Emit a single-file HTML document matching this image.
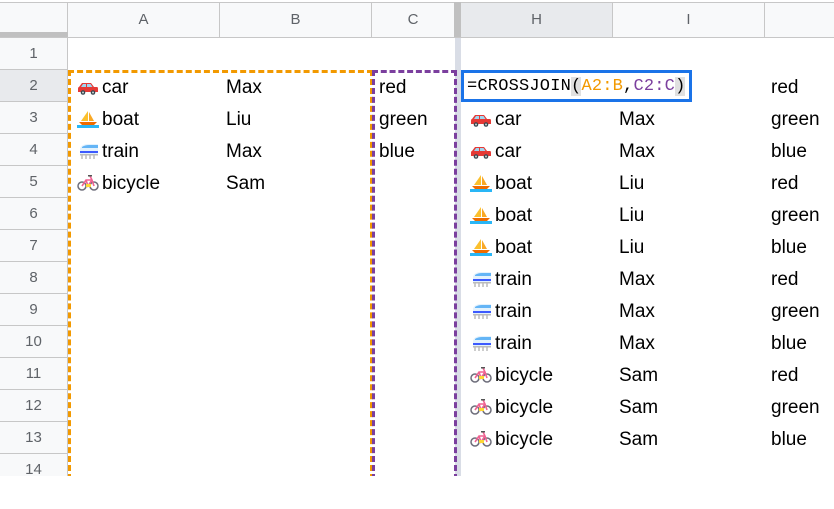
<!DOCTYPE html>
<html><head><meta charset="utf-8"><style>
*{margin:0;padding:0;box-sizing:border-box}
body{width:834px;height:509px;background:#fff;position:relative;overflow:hidden;font-family:"Liberation Sans",Arial,sans-serif;}
.a{position:absolute}
.hd{position:absolute;top:2px;height:35px;background:#f8f9fa;border-right:1px solid #c7c7c7;border-top:1px solid #c7c7c7;color:#5f6368;font-size:15px;text-align:center;line-height:34px}
.rh{position:absolute;left:0;width:68px;height:32px;background:#f8f9fa;border-bottom:1px solid #c7c7c7;border-right:1px solid #c7c7c7;color:#5f6368;font-size:15px;text-align:center;line-height:32px}
.t{position:absolute;font-size:19px;color:#000;line-height:32px;height:32px;white-space:nowrap;margin-top:2px}
.t svg{vertical-align:-3px;margin-right:3px}
</style></head><body>
<svg width="0" height="0" style="position:absolute">
<defs>
<symbol id="car" viewBox="0 0 22 16"><path d="M2 7 L5 3 H14 L17 7 H20 Q21 7 21 9 V12 H1 V9 Q1 7 2 7Z" fill="#e53935"/><path d="M6 4 H9 V7 H4Z M10 4 H13.5 L15.5 7 H10Z" fill="#9fd6f0"/><circle cx="6" cy="12.5" r="2.3" fill="#37474f"/><circle cx="16" cy="12.5" r="2.3" fill="#37474f"/><circle cx="6" cy="12.5" r="1" fill="#ccc"/><circle cx="16" cy="12.5" r="1" fill="#ccc"/></symbol>
<symbol id="boat" viewBox="0 0 22 18"><path d="M11 1 L11 11 L4 11Z" fill="#fbc02d"/><path d="M12 2 L17 11 L12 11Z" fill="#f9a825"/><path d="M2 12 H20 L17 15 H5Z" fill="#ef6c00"/><rect x="0" y="15" width="22" height="3" fill="#29b6f6"/></symbol>
<symbol id="train" viewBox="0 0 22 18"><path d="M3 12 V8 Q3 2 12 2 H21 V12Z" fill="#e3f2fd"/><path d="M5 5 Q8 3 12 3 H21 V6 H5Z" fill="#64b5f6"/><rect x="3" y="9" width="18" height="2" fill="#3d5afe"/><path d="M5 13 V17 M9 13 V17 M13 13 V17 M17 13 V17" stroke="#999" stroke-width="1"/><rect x="3" y="12" width="18" height="1.5" fill="#bbb"/></symbol>
<symbol id="bike" viewBox="0 0 22 18"><circle cx="5" cy="12" r="4" fill="none" stroke="#6d6d7a" stroke-width="1.5"/><circle cx="17" cy="12" r="4" fill="none" stroke="#6d6d7a" stroke-width="1.5"/><path d="M5 12 L9 6 H15 L17 12 M9 6 L11 12 L15 6 M13 2 L15 6" fill="none" stroke="#f06292" stroke-width="1.6"/><rect x="9" y="10" width="5" height="3" fill="#fdd835"/><rect x="11" y="1" width="4" height="1.5" fill="#555"/></symbol>
</defs></svg>

<div class="a" style="left:0;top:2px;width:68px;height:35px;background:#f8f9fa;border-right:1px solid #c7c7c7;border-top:1px solid #c7c7c7"></div>
<div class="a" style="left:0;top:32px;width:68px;height:5px;background:#c0c0c0"></div>
<div class="hd" style="left:68px;width:152px">A</div>
<div class="hd" style="left:220px;width:152px">B</div>
<div class="hd" style="left:372px;width:83px">C</div>
<div class="a" style="left:454px;top:2px;width:7px;height:35px;background:#c0c0c0"></div>
<div class="hd" style="left:461px;width:152px;background:#e8eaed">H</div>
<div class="hd" style="left:613px;width:152px">I</div>
<div class="hd" style="left:765px;width:69px;border-right:none"></div>
<div class="a" style="left:0;top:37px;width:834px;height:1px;background:#c7c7c7"></div>

<div class="rh" style="top:38px">1</div>
<div class="rh" style="top:70px;background:#e8eaed">2</div>
<div class="rh" style="top:102px">3</div>
<div class="rh" style="top:134px">4</div>
<div class="rh" style="top:166px">5</div>
<div class="rh" style="top:198px">6</div>
<div class="rh" style="top:230px">7</div>
<div class="rh" style="top:262px">8</div>
<div class="rh" style="top:294px">9</div>
<div class="rh" style="top:326px">10</div>
<div class="rh" style="top:358px">11</div>
<div class="rh" style="top:390px">12</div>
<div class="rh" style="top:422px">13</div>
<div class="rh" style="top:454px;height:22px;border-bottom:none;line-height:32px;overflow:hidden">14</div>

<div class="a" style="left:455px;top:38px;width:6px;height:438px;background:#d9dde6"></div>

<div class="a" style="left:68px;top:70px;width:305px;height:410px;border:3px dashed #f29900"></div>
<div class="a" style="left:372px;top:70px;width:85px;height:410px;border:3px dashed #7b3f9e"></div>
<div class="a" style="left:0;top:476px;width:834px;height:33px;background:#fff"></div>

<div class="t" style="left:77px;top:70px"><svg width="22" height="16"><use href="#car"/></svg>car</div>
<div class="t" style="left:77px;top:102px"><svg width="22" height="18"><use href="#boat"/></svg>boat</div>
<div class="t" style="left:77px;top:134px"><svg width="22" height="18"><use href="#train"/></svg>train</div>
<div class="t" style="left:77px;top:166px"><svg width="22" height="18"><use href="#bike"/></svg>bicycle</div>
<div class="t" style="left:226px;top:70px">Max</div>
<div class="t" style="left:226px;top:102px">Liu</div>
<div class="t" style="left:226px;top:134px">Max</div>
<div class="t" style="left:226px;top:166px">Sam</div>
<div class="t" style="left:379px;top:70px">red</div>
<div class="t" style="left:379px;top:102px">green</div>
<div class="t" style="left:379px;top:134px">blue</div>

<div class="a" style="left:461px;top:70px;width:231px;height:32px;border:3px solid #1a73e8;background:#fff;font-family:'Liberation Mono',monospace;font-size:17px;line-height:28px;padding-left:3px;letter-spacing:0.2px;white-space:nowrap">=CROSSJOIN<span style="background:#e0e0e0">(</span><span style="color:#f29900">A2:B</span>,<span style="color:#7b3f9e">C2:C</span><span style="background:#e0e0e0">)</span></div>

<div class="t" style="left:771px;top:70px">red</div>

<div class="t" style="left:470px;top:102px"><svg width="22" height="16"><use href="#car"/></svg>car</div><div class="t" style="left:619px;top:102px">Max</div><div class="t" style="left:771px;top:102px">green</div>
<div class="t" style="left:470px;top:134px"><svg width="22" height="16"><use href="#car"/></svg>car</div><div class="t" style="left:619px;top:134px">Max</div><div class="t" style="left:771px;top:134px">blue</div>
<div class="t" style="left:470px;top:166px"><svg width="22" height="18"><use href="#boat"/></svg>boat</div><div class="t" style="left:619px;top:166px">Liu</div><div class="t" style="left:771px;top:166px">red</div>
<div class="t" style="left:470px;top:198px"><svg width="22" height="18"><use href="#boat"/></svg>boat</div><div class="t" style="left:619px;top:198px">Liu</div><div class="t" style="left:771px;top:198px">green</div>
<div class="t" style="left:470px;top:230px"><svg width="22" height="18"><use href="#boat"/></svg>boat</div><div class="t" style="left:619px;top:230px">Liu</div><div class="t" style="left:771px;top:230px">blue</div>
<div class="t" style="left:470px;top:262px"><svg width="22" height="18"><use href="#train"/></svg>train</div><div class="t" style="left:619px;top:262px">Max</div><div class="t" style="left:771px;top:262px">red</div>
<div class="t" style="left:470px;top:294px"><svg width="22" height="18"><use href="#train"/></svg>train</div><div class="t" style="left:619px;top:294px">Max</div><div class="t" style="left:771px;top:294px">green</div>
<div class="t" style="left:470px;top:326px"><svg width="22" height="18"><use href="#train"/></svg>train</div><div class="t" style="left:619px;top:326px">Max</div><div class="t" style="left:771px;top:326px">blue</div>
<div class="t" style="left:470px;top:358px"><svg width="22" height="18"><use href="#bike"/></svg>bicycle</div><div class="t" style="left:619px;top:358px">Sam</div><div class="t" style="left:771px;top:358px">red</div>
<div class="t" style="left:470px;top:390px"><svg width="22" height="18"><use href="#bike"/></svg>bicycle</div><div class="t" style="left:619px;top:390px">Sam</div><div class="t" style="left:771px;top:390px">green</div>
<div class="t" style="left:470px;top:422px"><svg width="22" height="18"><use href="#bike"/></svg>bicycle</div><div class="t" style="left:619px;top:422px">Sam</div><div class="t" style="left:771px;top:422px">blue</div>
</body></html>
